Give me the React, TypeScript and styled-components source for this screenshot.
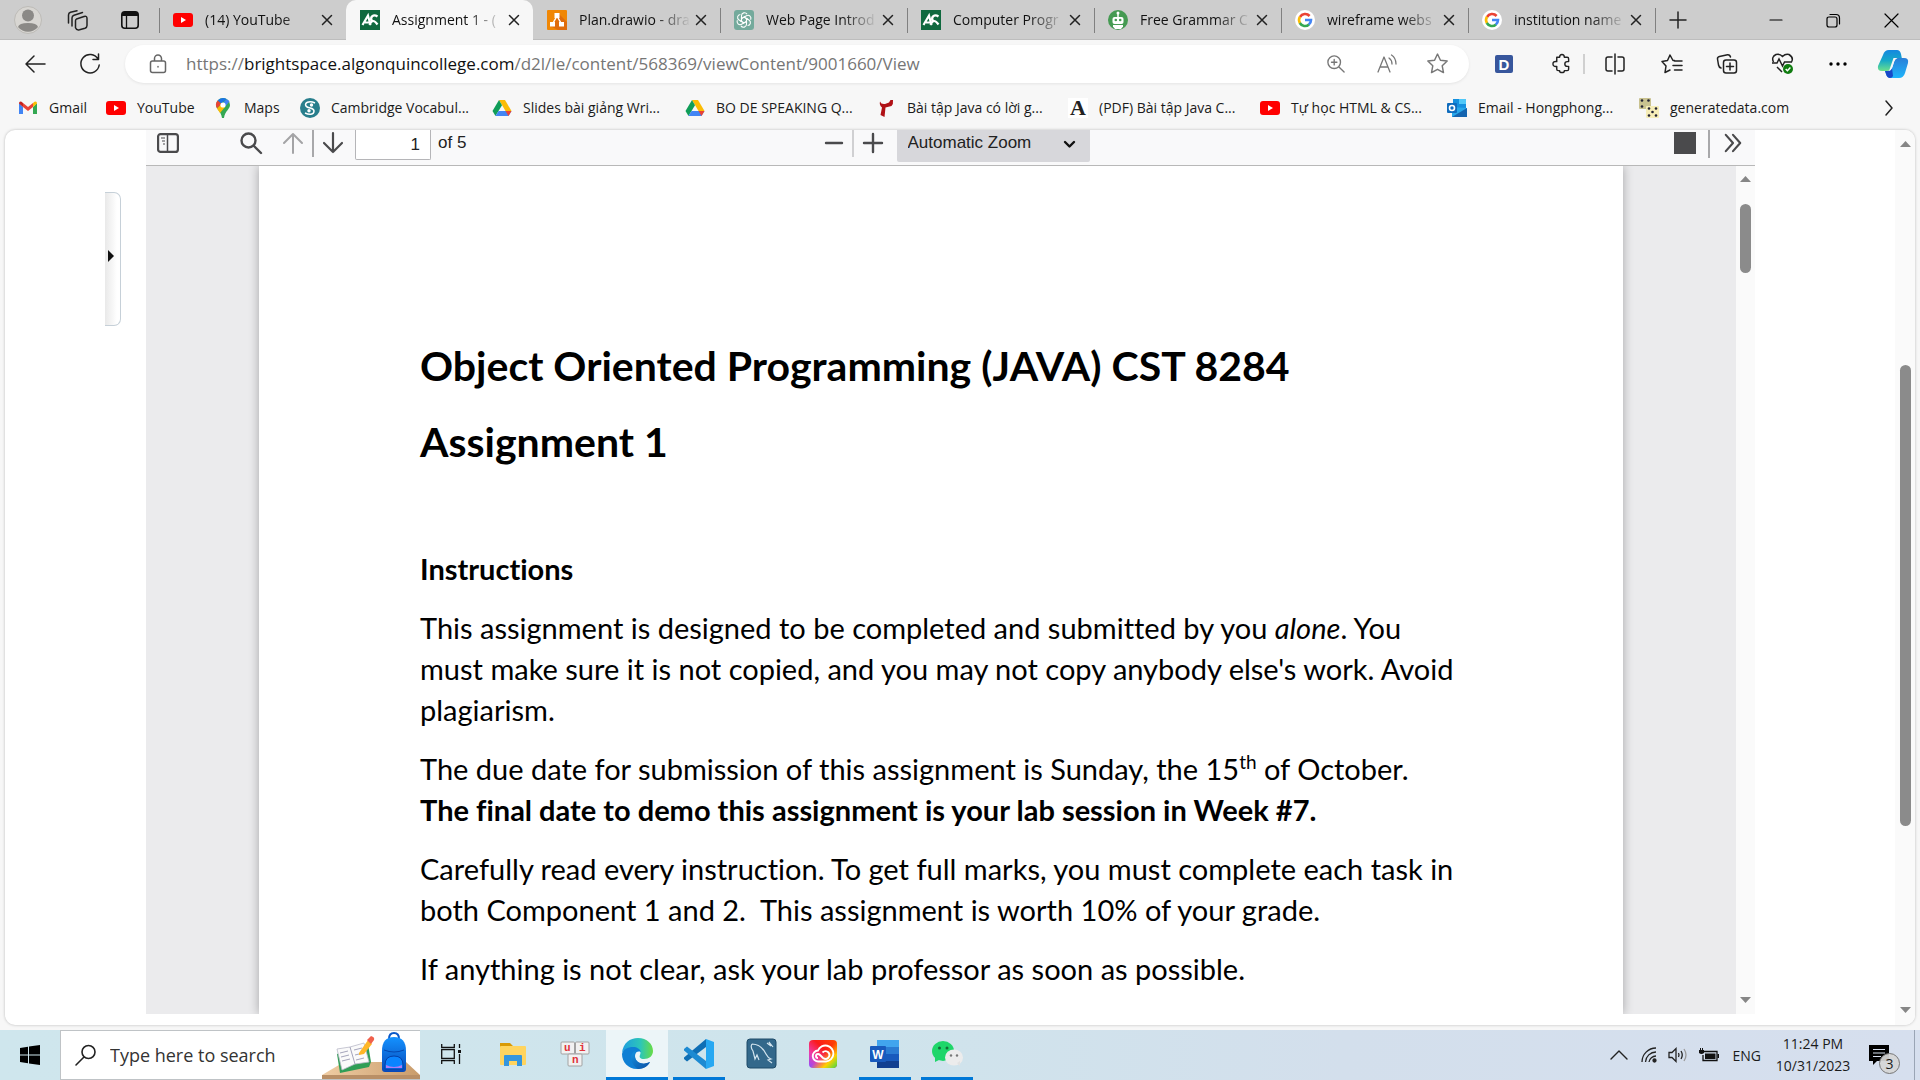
import React from "react";
import styled, { createGlobalStyle } from "styled-components";

const ui = `"Open Sans", "Noto Sans", sans-serif`;
const arial = `"Liberation Sans", Arial, sans-serif`;

const GlobalStyle = createGlobalStyle`
  * { box-sizing: border-box; }
  html, body, #root { height: 100%; margin: 0; }
  body { font-family: ${ui}; color: #1b1b1b; overflow: hidden; }
  button, input, select { font: inherit; color: inherit; margin: 0; }
  button { border: 0; padding: 0; background: none; }
  svg { display: block; flex: none; overflow: visible; }
`;

/* ---------- window ---------- */
const Desktop = styled.div`
  height: 100vh;
  display: flex;
  flex-direction: column;
  background: #f7f7f7;
`;

const TabStrip = styled.header`
  height: 40px;
  flex: none;
  display: flex;
  align-items: center;
  background: #cdcdcd;
  box-shadow: inset 0 -1px #bdbdbd;
`;

const StripTools = styled.div`
  display: flex;
  align-items: center;
  width: 159px;
  height: 100%;
  padding-left: 14px;
  flex: none;
`;

const IconButton = styled.button<{ $w?: number }>`
  display: grid;
  place-items: center;
  height: 100%;
  width: ${(p) => (p.$w ? `${p.$w}px` : "auto")};
  flex: none;
`;

const Tabs = styled.nav`
  display: flex;
  height: 100%;
  min-width: 0;
`;

const Tab = styled.div<{ $active?: boolean; $line?: boolean }>`
  display: flex;
  align-items: center;
  width: 187px;
  min-width: 0;
  padding-right: 14px;
  border-radius: 10px 10px 0 0;
  background: ${(p) => (p.$active ? "#f7f7f7" : "transparent")};
  &::before {
    content: "";
    width: 1px;
    height: 25px;
    margin-right: 13px;
    background: ${(p) => (p.$line ? "#808080" : "transparent")};
  }
`;

const TabTitle = styled.a`
  flex: 1;
  min-width: 0;
  margin: 0 6px 0 12px;
  white-space: nowrap;
  font-size: 14px;
  line-height: 20px;
  color: #111;
  text-decoration: none;
  mask-image: linear-gradient(90deg, #000 76px, transparent 112px);
`;

const WindowButtons = styled.div`
  display: flex;
  height: 100%;
  margin-left: auto;
`;

const AddressRow = styled.div`
  height: 47px;
  flex: none;
  display: flex;
  align-items: center;
`;

const AddressBar = styled.div`
  display: flex;
  align-items: center;
  flex: 1;
  min-width: 0;
  height: 38px;
  margin-left: 15px;
  border-radius: 19px;
  background: #fff;
  box-shadow: 0 1px 3px rgba(0, 0, 0, 0.08);
  padding: 0 8px 0 24px;
`;

const UrlText = styled.a`
  flex: 1;
  min-width: 0;
  margin-left: 19px;
  font-size: 17px;
  line-height: 24px;
  color: #767676;
  text-decoration: none;
  white-space: nowrap;
  b { font-weight: 400; color: #111; }
`;

const Divider = styled.span<{ $h: number; $c: string; $w?: number }>`
  width: ${(p) => p.$w ?? 2}px;
  height: ${(p) => p.$h}px;
  background: ${(p) => p.$c};
  flex: none;
`;

const Bookmarks = styled.nav`
  height: 43px;
  flex: none;
  display: flex;
  align-items: center;
  padding: 0 14px 2px 18px;
`;

const Bookmark = styled.a<{ $w: number }>`
  display: flex;
  align-items: center;
  gap: 11px;
  width: ${(p) => p.$w}px;
  flex: none;
  font-size: 14px;
  line-height: 20px;
  color: #1b1b1b;
  text-decoration: none;
  white-space: nowrap;
`;

const Overflow = styled(IconButton)`
  margin-left: auto;
`;

/* ---------- web content ---------- */
const ContentCard = styled.main`
  flex: 1;
  min-height: 0;
  display: flex;
  margin: 0 5px 5px;
  background: #fff;
  border-radius: 10px;
  box-shadow: 0 0 3px rgba(0, 0, 0, 0.25);
  overflow: hidden;
`;

const SideGutter = styled.aside`
  width: 141px;
  flex: none;
  padding: 62px 25px 0 0;
  display: flex;
  justify-content: flex-end;
  align-items: flex-start;
`;

const DrawerHandle = styled.button`
  width: 16px;
  height: 134px;
  display: flex;
  align-items: center;
  padding: 0 0 6px 3px;
  border: 1px solid #c6d0d8;
  border-left: 0;
  border-radius: 0 7px 7px 0;
  background: linear-gradient(90deg, #e9e9e9, #fff 80%);
`;

const Frame = styled.section`
  flex: 1;
  min-width: 0;
  display: flex;
  flex-direction: column;
  margin-bottom: 11px;
`;

const PdfToolbar = styled.div`
  height: 36px;
  flex: none;
  display: grid;
  grid-template-columns: 1fr auto 1fr;
  background: #f9f9fa;
  border-bottom: 1px solid #b8b8b8;
  color: #222;
  font-family: ${arial};
  font-size: 17px;
`;

const ToolGroup = styled.div<{ $pad: string; $end?: boolean }>`
  display: flex;
  align-items: flex-start;
  justify-content: ${(p) => (p.$end ? "flex-end" : "flex-start")};
  padding: ${(p) => p.$pad};
`;

const PageInput = styled.input`
  width: 76px;
  height: 30px;
  margin: 0 7px 0 12px;
  padding: 0 10px;
  text-align: right;
  border: 1px solid #b5b5b8;
  border-top: 0;
  border-radius: 0 0 2px 2px;
  background: #fff;
`;

const PageCount = styled.label`
  line-height: 25px;
`;

const ZoomSelect = styled.select`
  appearance: none;
  width: 193px;
  height: 32px;
  padding: 0 11px 7px;
  border: 0;
  border-radius: 0 0 2px 2px;
  background: #d7d7db;
`;

const SelectWrap = styled.div`
  display: grid;
  margin-left: 14px;
  > * { grid-area: 1 / 1; }
  svg { justify-self: end; margin: 9px 15px 0 0; pointer-events: none; }
`;

const ToolButton = styled(IconButton)`
  height: 26px;
`;

const ToolRule = styled.span<{ $w: number }>`
  display: flex;
  justify-content: center;
  width: ${(p) => p.$w}px;
`;

const SidebarButton = styled(ToolButton)`
  margin-right: 40px;
`;

const Viewer = styled.div`
  flex: 1;
  min-height: 0;
  display: flex;
  background: #ebebed;
`;

const PageScroll = styled.div`
  flex: 1;
  min-width: 0;
  overflow: hidden;
  padding: 0 113px;
`;

const Page = styled.article`
  min-height: 100%;
  padding: 170px 140px 0 161px;
  background: #fff;
  box-shadow: 0 0 10px rgba(0, 0, 0, 0.3);
  color: #000;
  font-family: Lato, "Open Sans", sans-serif;
  font-variant-ligatures: none;
`;

const Title = styled.h1`
  margin: 0 0 16px;
  font-size: 41px;
  line-height: 60px;
  font-weight: 700;
  white-space: nowrap;
`;

const Heading = styled.h2`
  margin: 76px 0 18px;
  font-size: 29px;
  line-height: 41px;
  font-weight: 700;
`;

const Para = styled.p`
  margin: 0 0 18px;
  font-size: 29px;
  line-height: 41px;
  white-space: nowrap;
  sup { font-size: 19px; line-height: 0; }
`;

const ScrollTrack = styled.div<{ $w: number; $pad: string }>`
  width: ${(p) => p.$w}px;
  flex: none;
  display: flex;
  flex-direction: column;
  align-items: center;
  padding: ${(p) => p.$pad};
  background: #fafafa;
`;

const Thumb = styled.div<{ $size: number }>`
  width: 11px;
  flex: ${(p) => p.$size} 0 0;
  border-radius: 6px;
  background: #8b8b8b;
`;

const Space = styled.div<{ $grow: number }>`
  flex: ${(p) => p.$grow} 0 0;
`;

const OuterSpace = styled.div`
  width: 140px;
  flex: none;
`;

/* ---------- taskbar ---------- */
const Taskbar = styled.footer`
  height: 50px;
  flex: none;
  display: flex;
  background: linear-gradient(90deg, #cfe6ed, #cfe4ec 45%, #d3dfec 70%, #d6dfee);
`;

const StartButton = styled(IconButton)`
  width: 60px;
`;

const SearchBox = styled.label`
  display: flex;
  align-items: center;
  width: 360px;
  flex: none;
  padding-left: 15px;
  background: #fff;
  border: 1px solid #bfc3c6;
  border-right: 0;
`;

const SearchInput = styled.input`
  flex: 1;
  min-width: 0;
  height: 100%;
  margin-left: 14px;
  padding: 0;
  border: 0;
  outline: 0;
  background: none;
  font-size: 18px;
  &::placeholder { color: #333; opacity: 1; }
`;

const Apps = styled.div`
  display: flex;
`;

const AppButton = styled.button<{ $open?: boolean; $active?: boolean }>`
  width: 62px;
  display: grid;
  place-items: center;
  background: ${(p) => (p.$active ? "#ecf5f8" : "none")};
  &::after {
    content: "";
    align-self: end;
    height: 3px;
    width: ${(p) => (p.$active ? 62 : 52)}px;
    background: ${(p) => (p.$open ? "#0078d7" : "transparent")};
  }
  grid-template-rows: 1fr 3px;
`;

const Tray = styled.div`
  display: flex;
  align-items: center;
  margin-left: auto;
`;

const Lang = styled.button`
  margin: 0 10px 0 8px;
  font-size: 14px;
`;

const Clock = styled.time`
  width: 84px;
  text-align: center;
  font-size: 14px;
  line-height: 22px;
`;

const Notice = styled.button`
  position: relative;
  width: 20px;
  height: 20px;
  margin: 0 25px 0 14px;
`;

const Badge = styled.span`
  position: absolute;
  left: 10px;
  top: 8px;
  width: 21px;
  height: 21px;
  border: 1px solid #777;
  border-radius: 50%;
  background: rgba(214, 214, 214, 0.93);
  font-size: 14px;
  line-height: 19px;
  text-align: center;
`;

const DesktopEdge = styled.div`
  width: 6px;
  height: 100%;
  border-left: 1px solid #9aa5b5;
`;

/* ---------- icons ---------- */
type LineProps = { d: string; s?: number; w?: number; c?: string; vb?: string };
const Line = ({ d, s = 20, w = 1.5, c = "#222", vb = "0 0 20 20" }: LineProps) => (
  <svg width={s} height={s} viewBox={vb} fill="none" stroke={c} strokeWidth={w} strokeLinecap="round" strokeLinejoin="round">
    <path d={d} />
  </svg>
);
const CloseIcon = () => <Line s={10} vb="0 0 10 10" w={1.5} d="M0.5 0.5 9.5 9.5M9.5 0.5 0.5 9.5" />;
const YouTube = () => (
  <svg width="20" height="20" viewBox="0 0 20 20"><rect y="3" width="20" height="14" rx="3" fill="#f00" /><path d="M8 7v6l5-3z" fill="#fff" /></svg>
);
const College = () => (
  <svg width="20" height="20" viewBox="0 0 20 20"><rect width="20" height="20" fill="#10693f" /><path d="M2.500 15 8 5.500l2.500 9.500M5 12.500h5M17.500 6.500C13.500 3.500 9.500 7 12 11M9.500 15c2-5 4.500-5.500 8-.5" fill="none" stroke="#fff" strokeWidth="2.200" /></svg>
);
const Drawio = () => (
  <svg width="20" height="20" viewBox="0 0 20 20"><rect width="20" height="20" rx="1" fill="#f08705" /><path d="M12 4 20 12v8h-9l-8-4z" fill="#df6c0c" /><path d="M10 6 5.500 14M10 6l4.500 8" stroke="#fff" strokeWidth="1.500" /><path d="M7.500 3h5v5h-5zM3 12h5v4.500H3zM12 12h5v4.500h-5z" fill="#fff" /></svg>
);
const ChatGpt = () => (
  <svg width="20" height="20" viewBox="0 0 20 20"><rect width="20" height="20" rx="3" fill="#74aa9c" /><g fill="none" stroke="#fff" strokeWidth="1.100">{[0, 60, 120, 180, 240, 300].map((a) => (<path key={a} transform={`rotate(${a} 10 10)`} d="M7.500 8.600V5.700a3 3 0 0 1 5.500-1.600M7.500 8.600 10 7.100l3.800 2.200" />))}</g></svg>
);
const Grammar = () => (
  <svg width="20" height="20" viewBox="0 0 20 20"><circle cx="10" cy="10" r="10" fill="#459a52" /><path d="M10 3v4" stroke="#fff" strokeWidth="1.500" /><circle cx="10" cy="3" r="1.500" fill="#fff" /><rect x="4.500" y="7" width="11" height="7" rx="2" fill="#fff" /><circle cx="7.800" cy="10" r="1.300" fill="#459a52" /><circle cx="12.200" cy="10" r="1.300" fill="#459a52" /><path d="M5 15h10v1.500l-2 2.500H7l-2-2.500z" fill="#fff" /></svg>
);
const Google = () => (
  <svg width="20" height="20" viewBox="0 0 20 20"><circle cx="10" cy="10" r="10" fill="#fff" /><g fill="none" strokeWidth="2.600"><path d="M14.600 6A6 6 0 0 0 5 7" stroke="#ea4335" /><path d="M5 6.800a6 6 0 0 0 0 6.400" stroke="#fbbc05" /><path d="M4.800 13a6 6 0 0 0 9.200 1.500" stroke="#34a853" /><path d="M13.800 14.600A6 6 0 0 0 16 10h-6" stroke="#4285f4" /></g></svg>
);
const Gmail = () => (
  <svg width="20" height="20" viewBox="0 0 20 20"><path d="M1 5v11h4V9z" fill="#4285f4" /><path d="M15 9v7h4V5z" fill="#34a853" /><path d="M1 5.500 5 9V5L3.500 3.700Q1 3 1 5.500z" fill="#c5221f" /><path d="M15 5v4l4-3.500Q19 3 16.500 3.700z" fill="#fbbc04" /><path d="M5 5v4l5 4 5-4V5l-5 4z" fill="#ea4335" /></svg>
);
const Maps = () => (
  <svg width="20" height="20" viewBox="0 0 20 20"><path d="M10 0a7 7 0 0 1 7 7c0 4-5 6-6 13h-2C8 13 3 11 3 7a7 7 0 0 1 7-7z" fill="#34a853" /><path d="M10 0a7 7 0 0 0-5.400 2.500L8 5.500 13.500 1A7 7 0 0 0 10 0z" fill="#1a73e8" /><path d="M4.600 2.500A7 7 0 0 0 4 10.500L8.300 5.700z" fill="#ea4335" /><path d="m4 10.500 4-4 4 2.500-5 6z" fill="#fbbc04" /><path d="M13.500 1 9 6l3 3 4.500-5.500Q15.500 2 13.500 1z" fill="#4285f4" /><circle cx="10" cy="7" r="2.600" fill="#fff" /></svg>
);
const Cambridge = () => (
  <svg width="20" height="20" viewBox="0 0 20 20"><circle cx="10" cy="10" r="10" fill="#287e8c" /><path d="M15 5C9 2 4 5 6 8s8 1 8 5-5 4-9 2" fill="none" stroke="#fff" strokeWidth="1.500" /><circle cx="11.500" cy="7" r="1.700" fill="#fff" /><circle cx="9" cy="12.800" r="1.700" fill="#fff" /></svg>
);
const Drive = () => (
  <svg width="20" height="20" viewBox="0 0 20 20"><path d="M7 2h6l6.500 11h-6z" fill="#fbbc04" /><path d="M7 2 .5 13l3 5L10 7.200z" fill="#0f9d58" /><path d="M6.500 13h13l-3 5h-13z" fill="#4285f4" /><path d="m16.500 18 3-5h-6z" fill="#ea4335" /></svg>
);
const RedMark = () => (
  <svg width="20" height="20" viewBox="0 0 20 20"><path d="M4 3.500q1 3 5 2.500l4-1.500 1.500-2.500L17 2q.5 4-1.500 6l-6 1.500L8.500 19l-4-2L6 9.500Q3 7 4 3.500z" fill="#b01116" /></svg>
);
const Academia = () => (
  <svg width="20" height="20" viewBox="0 0 20 20"><rect width="20" height="20" fill="#fff" /><text x="10" y="17" textAnchor="middle" fontFamily="Liberation Serif, serif" fontWeight="700" fontSize="22" fill="#222">A</text></svg>
);
const Outlook = () => (
  <svg width="20" height="20" viewBox="0 0 20 20"><path d="M6 1h13v10H6z" fill="#1490df" /><path d="M12 1h7v5h-7z" fill="#50c8f8" /><path d="M5 9l15 1v9H5z" fill="#28a8ea" /><path d="M5 19 20 10v9z" fill="#1565b0" /><rect y="5" width="10" height="10" rx="1" fill="#0f6cbd" /><circle cx="5" cy="10" r="2.500" fill="none" stroke="#fff" strokeWidth="1.600" /></svg>
);
const Dice = () => (
  <svg width="20" height="20" viewBox="0 0 20 20"><rect width="12" height="11" rx="1" fill="#c9c290" /><rect x="7" y="8" width="13" height="12" rx="1" fill="#f6edb8" /><g fill="#223">{[[3, 2.5], [9.5, 2.5], [3, 8.5], [10, 10.5], [17, 10.5], [13.5, 14], [10, 17.500], [17, 17.500]].map(([x, y]) => (<circle key={`${x}-${y}`} cx={x} cy={y} r="1.300" />))}</g></svg>
);
const Copilot = () => (
  <svg width="30" height="28" viewBox="0 0 30 28">
    <defs><linearGradient id="cpA" x1="0" y1="0" x2="0" y2="1"><stop stopColor="#1587e0" /><stop offset=".5" stopColor="#16a9c8" /><stop offset="1" stopColor="#6be08c" /></linearGradient><linearGradient id="cpB" x1="0" y1="0" x2="0" y2="1"><stop stopColor="#2a7fd8" /><stop offset="1" stopColor="#1fb5fb" /></linearGradient></defs>
    <path d="M5 5Q6.500 0 11 0h8q3 0 4 4l1 5h-5q-3 0-4 3l-2 6q-1 3-4 3H4q-5 0-4-5z" fill="url(#cpA)" />
    <path d="M19 8h7q5 0 4 5l-3 10q-1.500 5-6 5h-8q-4 0-5-4l-1-3h3q3 0 4-3l2-6q1-4 3-4z" fill="url(#cpB)" />
    <path d="M7 21h3q3 0 4-3l1 8q-1 2-3 2-3 0-4-4z" fill="#1848c8" />
    <path d="M15.500 8h4q-2.500 1-3.500 4l-1.500 5q-1 3-3.500 4z" fill="#f7f7f7" />
  </svg>
);
const Tri = ({ up }: { up?: boolean }) => (
  <svg width="11" height="6" viewBox="0 0 11 6"><path d={up ? "M0 6 5.500 0 11 6z" : "M0 0h11L5.500 6z"} fill="#868686" /></svg>
);
const Avatar = () => (
  <svg width="28" height="28" viewBox="0 0 28 28"><circle cx="14" cy="14" r="13.500" fill="#d8d6d2" stroke="#bdbbb7" /><circle cx="14" cy="9.500" r="6" fill="#8b8986" /><path d="M4 21q1-4 10-4t10 4a13 13 0 0 1-20 0z" fill="#8b8986" /></svg>
);
const Desk = () => (
  <svg width="98" height="48" viewBox="0 0 98 48">
    <defs><linearGradient id="bp" x1="0" y1="0" x2="0" y2="1"><stop stopColor="#1492ff" /><stop offset="1" stopColor="#0748b8" /></linearGradient><linearGradient id="dk"><stop stopColor="#f0cda4" /><stop offset="1" stopColor="#c99c6b" /></linearGradient></defs>
    <path d="M22 31h62l14 13H0z" fill="url(#dk)" /><path d="M0 44h98v4H0z" fill="#b98f66" />
    <path d="m15 23 3 19 29-6 2-5-3-18z" fill="#2f9e55" />
    <path d="m15 18 13-2 14-4 5 19-14 2-13 6z" fill="#fafafa" stroke="#b9b9c8" strokeWidth=".8" /><path d="m28 16 5 17M18 22l8-2m-7 6 8-2m-7 6 8-2m4-9 8-2m-7 7 8-2m-7 7 8-2" stroke="#a5a5bb" fill="none" />
    <path d="m37 22 9-13 4 4-8 10-5 1z" fill="#ffb627" /><path d="m45 9 4-4q4 1 3 4l-3 4z" fill="#f0604c" />
    <path d="M67 8q0-6 5-6t5 6" fill="none" stroke="#0a58c8" strokeWidth="2" /><path d="M60 20q0-14 12-14t12 14v18q0 3-3 3H63q-3 0-3-3z" fill="url(#bp)" /><path d="M63 34q0-9 9-9t9 9v4H63z" fill="#0a84ff" stroke="#0440a8" /><path d="M64 34q8 4 16 0v3H64z" fill="#b07cf5" /><path d="M62 19q10 4 20 0" fill="none" stroke="#0447b0" />
  </svg>
);
const TaskView = () => (
  <svg width="20" height="20" viewBox="0 0 20 20" fill="none" stroke="#111" strokeWidth="1.300"><path d="M.7 0v3.500h12.600V0M.7 20v-3.500h12.600V20M.7 5.700h12.600v8.600H.7zM18.500 0v4M18.500 10v10" /><path d="M17 6h3v3h-3z" fill="#111" stroke="none" /></svg>
);
const Explorer = () => (
  <svg width="28" height="28" viewBox="0 0 28 28"><path d="M1 3h10l3 3h12v6H1z" fill="#d99a06" /><rect x="1" y="6" width="26" height="19" rx="1" fill="#ffd45e" /><path d="M5 26V16q0-1 1-1h16q1 0 1 1v10h-5v-5h-8v5z" fill="#3596dd" /></svg>
);
const Unikey = () => (
  <svg width="30" height="26" viewBox="0 0 30 26"><g fill="#f1f1f1" stroke="#a2a2a2"><rect x="1" y="1" width="13.500" height="12" rx="1" /><rect x="15.500" y="1" width="13.500" height="12" rx="1" /><rect x="8" y="13" width="14" height="12" rx="1" /></g><g fill="#e0343a" fontFamily="Liberation Mono, monospace" fontWeight="700" fontSize="11"><text x="4" y="10">u</text><text x="19" y="10">i</text><text x="12" y="22">n</text></g></svg>
);
const Edge = () => (
  <svg width="31" height="31" viewBox="0 0 31 31">
    <defs><linearGradient id="e1"><stop stopColor="#1e9de0" /><stop offset=".6" stopColor="#2dc6b8" /><stop offset="1" stopColor="#68dc45" /></linearGradient><linearGradient id="e2" x1="0" y1="0" x2="1" y2="1"><stop stopColor="#1491df" /><stop offset="1" stopColor="#0a4fa4" /></linearGradient></defs>
    <path d="M0 15C1 5 8 0 16 0c9 0 15 6 15 13 0 5-4 8-9 8-4 0-5-2-4-4 2-4-2-7-7-7C6 10 1 12 0 15z" fill="url(#e1)" />
    <path d="M0 16C1 11 6 9 11 9c4 0 7 2 8 5-6-2-7 4-5 8 3 5 9 5 14 2-3 5-8 7-13 7C6 31 0 24 0 16z" fill="#0f7fd4" />
    <path d="M13 13c-7 4-4 14 3 18 6 0 10-3 12-7-7 3-14 1-15-5-.3-2 0-4 1-6z" fill="url(#e2)" />
  </svg>
);
const Code = () => (
  <svg width="30" height="30" viewBox="0 0 30 30"><path d="M22 0v8L3 22.500 0 20v-1.500z" fill="#0f6fb5" /><path d="M22 30v-8L3 7.500 0 10v1.500z" fill="#1d8ad2" /><path d="M22 0l8 3v24l-8 3z" fill="#27a8f2" /></svg>
);
const MySql = () => (
  <svg width="29" height="29" viewBox="0 0 29 29"><rect width="29" height="29" rx="3" fill="#33688b" stroke="#1f4b68" /><path d="M5 5q9 0 14 10 2 4 5 5l-3 1 4 3M5 5q-2 3 1 7l2 8 2-4 2 5M20 4l4 3-2-4 4 5" fill="none" stroke="#d3e4ee" strokeWidth="1.200" /></svg>
);
const Creative = () => (
  <svg width="28" height="28" viewBox="0 0 28 28">
    <defs>
      <linearGradient id="cc" x1="0" y1="1" x2="1" y2="0"><stop stopColor="#8a4dff" /><stop offset=".3" stopColor="#f03ba8" /><stop offset=".6" stopColor="#fa1a1a" /><stop offset="1" stopColor="#ff4a00" /></linearGradient>
      <linearGradient id="cd" x1="0" y1="0" x2="1" y2="1"><stop offset=".5" stopColor="#ffb000" stopOpacity="0" /><stop offset=".75" stopColor="#ffd000" /><stop offset="1" stopColor="#3ddc4b" /></linearGradient>
    </defs>
    <rect width="28" height="28" rx="4" fill="url(#cc)" /><rect width="28" height="28" rx="4" fill="url(#cd)" />
    <path d="M9.500 21.500a5.500 5.500 0 0 1-.5-11 8 8 0 1 1 8 11zM9 18q-2 0-2-2t2-2q1 0 2 1l3 3q3 2 5 0 3-3 0-6-3-2-5.500.5" fill="none" stroke="#fff" strokeWidth="1.900" />
  </svg>
);
const Word = () => (
  <svg width="30" height="28" viewBox="0 0 30 28"><path d="M7 0h22v7H7z" fill="#41a5ee" /><path d="M7 7h22v7H7z" fill="#2b7cd3" /><path d="M7 14h22v7H7z" fill="#185abd" /><path d="M7 21h22v7H7z" fill="#103f91" /><rect y="6" width="16" height="16" rx="1" fill="#185abd" /><text x="8" y="18.500" textAnchor="middle" fontFamily="Liberation Sans, sans-serif" fontWeight="700" fontSize="12" fill="#fff">W</text></svg>
);
const WeChat = () => (
  <svg width="31" height="26" viewBox="0 0 31 26"><ellipse cx="11" cy="10" rx="11" ry="10" fill="#1fd66a" /><path d="m3 16 0 5 6-3z" fill="#1fd66a" /><ellipse cx="22" cy="16.500" rx="9" ry="8" fill="#ececec" /><path d="m25 22 3 3v-5z" fill="#e2e2e2" /><g fill="#146b38"><circle cx="7.500" cy="7" r="1.500" /><circle cx="15" cy="7" r="1.500" /></g><g fill="#777"><circle cx="19" cy="14.500" r="1.200" /><circle cx="25" cy="14.500" r="1.200" /></g></svg>
);

const tabs = [
  { t: "(14) YouTube", i: <YouTube />, line: true },
  { t: "Assignment 1 - (", i: <College />, active: true },
  { t: "Plan.drawio - dra", i: <Drawio /> },
  { t: "Web Page Introd", i: <ChatGpt />, line: true },
  { t: "Computer Progr", i: <College />, line: true },
  { t: "Free Grammar C", i: <Grammar />, line: true },
  { t: "wireframe webs", i: <Google />, line: true },
  { t: "institution name", i: <Google />, line: true },
];

const bookmarks = [
  { t: "Gmail", i: <Gmail />, w: 88 },
  { t: "YouTube", i: <YouTube />, w: 107 },
  { t: "Maps", i: <Maps />, w: 87 },
  { t: "Cambridge Vocabul...", i: <Cambridge />, w: 192 },
  { t: "Slides bài giảng Wri...", i: <Drive />, w: 193 },
  { t: "BO DE SPEAKING Q...", i: <Drive />, w: 191 },
  { t: "Bài tập Java có lời g...", i: <RedMark />, w: 192 },
  { t: "(PDF) Bài tập Java C...", i: <Academia />, w: 192 },
  { t: "Tự học HTML & CS...", i: <YouTube />, w: 187 },
  { t: "Email - Hongphong...", i: <Outlook />, w: 192 },
  { t: "generatedata.com", i: <Dice />, w: 160 },
];

const apps = [
  { n: "Task View", i: <TaskView /> },
  { n: "File Explorer", i: <Explorer /> },
  { n: "UniKey", i: <Unikey /> },
  { n: "Edge", i: <Edge />, open: true, active: true },
  { n: "Visual Studio Code", i: <Code />, open: true },
  { n: "MySQL Workbench", i: <MySql /> },
  { n: "Creative Cloud", i: <Creative /> },
  { n: "Word", i: <Word />, open: true },
  { n: "WeChat", i: <WeChat />, open: true },
];

const grey = "#4a4a4c";

export default function App() {
  return (
    <Desktop>
      <GlobalStyle />
      <TabStrip>
        <StripTools>
          <IconButton $w={28} aria-label="Profile"><Avatar /></IconButton>
          <IconButton $w={70} aria-label="Workspaces"><Line s={21} vb="0 0 21 21" d="M9.500 9 17 6.500q3-1 3 2v7q0 2-2 2.800l-5.500 1.500q-3 .7-4-2v-7q0-1 1-1.800zM5 16V8q0-2 2-2.800L15.500 2.500M1.500 13V5q0-2 2-2.800L10 .8" /></IconButton>
          <IconButton $w={36} aria-label="Tab actions"><svg width="18" height="18" viewBox="0 0 18 18"><rect x=".8" y=".8" width="16.400" height="16.400" rx="3" fill="none" stroke="#111" strokeWidth="1.600" /><path d="M1 5V3q0-2 2-2h12q2 0 2 2v2z" fill="#111" /><path d="M5.500 5v12" stroke="#111" strokeWidth="1.300" /></svg></IconButton>
        </StripTools>
        <Tabs>
          {tabs.map((x) => (
            <Tab key={x.t} $active={x.active} $line={x.line}>
              {x.i}
              <TabTitle href="#">{x.t}</TabTitle>
              <IconButton aria-label="Close tab"><CloseIcon /></IconButton>
            </Tab>
          ))}
        </Tabs>
        <Divider $h={25} $w={1} $c="#808080" />
        <IconButton $w={43} aria-label="New tab"><Line s={16} vb="0 0 16 16" d="M8 0v16M0 8h16" /></IconButton>
        <WindowButtons>
          <IconButton $w={57} aria-label="Minimize"><Line s={12} vb="0 0 12 12" w={1.2} c="#000" d="M0 6h12" /></IconButton>
          <IconButton $w={58} aria-label="Restore"><Line s={13} vb="0 0 13 13" w={1.2} c="#000" d="M2 3h6q2 0 2 2v6q0 2-2 2H2q-2 0-2-2V5q0-2 2-2zM3 .5h6q3.500 0 3.500 3.500v6" /></IconButton>
          <IconButton $w={58} aria-label="Close"><Line s={13} vb="0 0 13 13" w={1.2} c="#000" d="M0 0l13 13M13 0 0 13" /></IconButton>
        </WindowButtons>
      </TabStrip>

      <AddressRow>
        <IconButton $w={70} aria-label="Back"><Line d="M9 2 1 10l8 8M1 10h19" /></IconButton>
        <IconButton $w={40} aria-label="Reload"><Line d="M18 5A9.200 9.200 0 1 0 19.200 11M18.500 0v5.500H13" /></IconButton>
        <AddressBar>
          <Line s={18} c="#666" vb="0 0 18 18" d="M3.500 6h11q2 0 2 2v7.500q0 2-2 2h-11q-2 0-2-2V8q0-2 2-2zM5.500 6V3.500a3.500 3.500 0 0 1 7 0V6M9 11.500v.5" />
          <UrlText href="#">https://<b>brightspace.algonquincollege.com</b>/d2l/le/content/568369/viewContent/9001660/View</UrlText>
          <IconButton $w={50} aria-label="Zoom"><Line c="#777" s={18} d="M15 8A7 7 0 1 1 1 8a7 7 0 0 1 14 0zM13 13l6 6M8 5v6M5 8h6" /></IconButton>
          <IconButton $w={52} aria-label="Read aloud"><Line c="#777" w={1.3} d="M1 18 7 3l6 15M3.500 13h7M12 4q3 2 3 6M14.500 1Q19 4 19 10" /></IconButton>
          <IconButton $w={48} aria-label="Favorite"><Line c="#777" w={1.4} s={21} d="m10 1 2.800 5.900 6.400.8-4.700 4.500 1.200 6.400L10 15.500l-5.700 3.100 1.200-6.400L.8 7.700l6.400-.8z" /></IconButton>
        </AddressBar>
        <IconButton $w={70} aria-label="Dictionary"><svg width="18" height="18" viewBox="0 0 18 18"><rect width="18" height="18" rx="2" fill="#37569c" /><text x="9" y="14.500" textAnchor="middle" fontFamily="Liberation Sans, sans-serif" fontWeight="700" fontSize="15" fill="#fff">D</text></svg></IconButton>
        <IconButton $w={44} aria-label="Extensions"><Line s={19} d="M5 3.500h3Q8 .5 10.500.5T13 3.500h3q1.500 0 1.500 1.500v3h-1.500q-2.500 0-2.500 2.500T16 13h1.500v3q0 1.500-1.500 1.500h-3q0 2-2.500 2t-2.500-2H6.500Q5 17.500 5 16v-3Q1 13.500 1 10.500T5 8z" /></IconButton>
        <Divider $h={20} $c="#d0d0d0" />
        <IconButton $w={60} aria-label="Split screen"><Line d="M7 3H3Q1 3 1 5v10q0 2 2 2h4M13 3h4q2 0 2 2v10q0 2-2 2h-4M10 0v20" /></IconButton>
        <IconButton $w={54} aria-label="Favorites"><Line d="M12.500 6.500H11L8 1 5.500 6.500 0 7.500l4 4.500-1 6.500 5-2.500M12.500 7H20M11 11.500h9M12.500 16H20" /></IconButton>
        <IconButton $w={56} aria-label="Collections"><Line d="M9 6h8q2.500 0 2.500 2.500v8Q19.500 19 17 19H9q-2.500 0-2.500-2.500v-8Q6.500 6 9 6zM13 9v7M9.500 12.500h7M4 14q-2-.5-2.500-3L.5 5Q.3 3 2.500 2.500l8-1.800Q13 .5 13.500 3" /></IconButton>
        <IconButton $w={55} aria-label="Browser essentials"><svg width="21" height="21" viewBox="0 0 21 21" fill="none" stroke="#222" strokeWidth="1.500"><path d="M1.500 9Q-1 4 4 1.500q4-1 6.500 2 3-3 6.500-2 5 3 2.500 7.500M5 14l5 5M0 10h5l2-4 3.500 7 2-4H20" /><circle cx="16" cy="16" r="5" fill="#107c10" stroke="none" /><path d="m13.700 16 1.700 1.700 3-3.200" stroke="#fff" /></svg></IconButton>
        <IconButton $w={56} aria-label="More"><svg width="18" height="4" viewBox="0 0 18 4"><circle cx="2" cy="2" r="1.700" /><circle cx="9" cy="2" r="1.700" /><circle cx="16" cy="2" r="1.700" /></svg></IconButton>
        <IconButton $w={54} aria-label="Copilot"><Copilot /></IconButton>
      </AddressRow>

      <Bookmarks>
        {bookmarks.map((b) => (
          <Bookmark key={b.t} href="#" $w={b.w}>{b.i}{b.t}</Bookmark>
        ))}
        <Overflow $w={34} aria-label="More bookmarks"><Line s={14} vb="0 0 14 14" d="M4 0l6 7-6 7" /></Overflow>
      </Bookmarks>

      <ContentCard>
        <SideGutter>
          <DrawerHandle aria-label="Open panel"><svg width="6" height="12" viewBox="0 0 6 12"><path d="M0 0 6 6 0 12z" fill="#111" /></svg></DrawerHandle>
        </SideGutter>
        <Frame>
          <PdfToolbar>
            <ToolGroup $pad="0 0 0 11px">
              <SidebarButton $w={22} aria-label="Sidebar"><svg width="22" height="20" viewBox="0 0 22 20" fill="none" stroke={grey} strokeWidth="2.200"><rect x="1.100" y="1.100" width="19.800" height="17.800" rx="2.500" /><path d="M10.500 1v18" strokeWidth="1.500" /><path d="M4 5h4M5 8h3M6 11h2" strokeWidth="1.200" /></svg></SidebarButton>
              <ToolButton $w={64} aria-label="Find"><Line s={22} vb="0 0 22 22" c={grey} w={2.4} d="M15.500 8.500a7 7 0 1 1-14 0 7 7 0 0 1 14 0zM13.500 13.500 21 21" /></ToolButton>
              <ToolButton aria-label="Previous page"><Line s={20} c="#a4a4a6" w={2} d="M10 20V1M1 10l9-9 9 9" /></ToolButton>
              <ToolRule $w={20}><Divider $h={27} $c="#a8a8aa" /></ToolRule>
              <ToolButton aria-label="Next page"><Line s={20} c={grey} w={2.2} d="M10 0v19M1 10l9 9 9-9" /></ToolButton>
              <PageInput id="page" defaultValue="1" />
              <PageCount htmlFor="page">of 5</PageCount>
            </ToolGroup>
            <ToolGroup $pad="0 0 0 13px">
              <ToolButton aria-label="Zoom out"><Line s={18} vb="0 0 18 18" c={grey} w={2.4} d="M1 9h16" /></ToolButton>
              <ToolRule $w={20}><Divider $h={27} $c="#d0d0d2" /></ToolRule>
              <ToolButton aria-label="Zoom in"><Line s={20} c={grey} w={2.4} d="M1 10h18M10 1v18" /></ToolButton>
              <SelectWrap>
                <ZoomSelect aria-label="Zoom"><option>Automatic Zoom</option></ZoomSelect>
                <Line s={11} vb="0 0 11 11" c="#111" w={2.4} d="M1 3l4.500 4.500L10 3" />
              </SelectWrap>
            </ToolGroup>
            <ToolGroup $pad="0 11px 0 0" $end>
              <ToolButton $w={22} aria-label="Colour"><svg width="22" height="22" viewBox="0 0 22 22"><path d="M0 0h22v22H0z" fill={grey} /></svg></ToolButton>
              <ToolRule $w={26}><Divider $h={28} $c="#a8a8aa" /></ToolRule>
              <ToolButton $w={22} aria-label="Tools"><Line s={18} c={grey} w={2.4} d="M2 1l8 9-8 9M10 1l8 9-8 9" /></ToolButton>
            </ToolGroup>
          </PdfToolbar>
          <Viewer>
            <PageScroll>
              <Page>
                <Title>Object Oriented Programming (JAVA) CST 8284</Title>
                <Title>Assignment 1</Title>
                <Heading>Instructions</Heading>
                <Para>This assignment is designed to be completed and submitted by you <em>alone</em>. You<br />must make sure it is not copied, and you may not copy anybody else's work. Avoid<br />plagiarism.</Para>
                <Para>The due date for submission of this assignment is Sunday, the 15<sup>th</sup> of October.<br /><strong>The final date to demo this assignment is your lab session in Week #7.</strong></Para>
                <Para>Carefully read every instruction. To get full marks, you must complete each task in<br />both Component 1 and 2.&nbsp; This assignment is worth 10% of your grade.</Para>
                <Para>If anything is not clear, ask your lab professor as soon as possible.</Para>
              </Page>
            </PageScroll>
            <ScrollTrack $w={19} $pad="10px 0 11px">
              <Tri up /><Space $grow={22} /><Thumb $size={69} /><Space $grow={724} /><Tri />
            </ScrollTrack>
          </Viewer>
        </Frame>
        <OuterSpace />
        <ScrollTrack $w={20} $pad="11px 0 12px">
          <Tri up /><Space $grow={218} /><Thumb $size={461} /><Space $grow={181} /><Tri />
        </ScrollTrack>
      </ContentCard>

      <Taskbar>
        <StartButton aria-label="Start"><svg width="20" height="20" viewBox="0 0 20 20"><path d="M0 3 8 1.800v7.700H0zM9 1.600 20 0v9.500H9zM0 10.500h8v7.700L0 17zM9 10.500h11V20L9 18.400z" /></svg></StartButton>
        <SearchBox>
          <Line s={20} w={1.6} d="M19 7A6.500 6.500 0 1 1 6 7a6.500 6.500 0 0 1 13 0zM8 12 0 20" />
          <SearchInput placeholder="Type here to search" aria-label="Search" />
          <Desk />
        </SearchBox>
        <Apps>
          {apps.map((a) => (
            <AppButton key={a.n} aria-label={a.n} $open={a.open} $active={a.active}>{a.i}</AppButton>
          ))}
        </Apps>
        <Tray>
          <IconButton $w={32} aria-label="Show hidden icons"><Line s={16} vb="0 0 16 16" w={1.4} d="M0 12l8-8 8 8" /></IconButton>
          <IconButton $w={28} aria-label="Network"><svg width="16" height="16" viewBox="0 0 16 16" fill="none" stroke="#222" strokeWidth="1.300"><path d="M1 15A14 14 0 0 1 15 1M4.500 15A10.500 10.500 0 0 1 15 5M8 15a7 7 0 0 1 7-6" /><circle cx="13.500" cy="13.500" r="1.500" fill="#222" /></svg></IconButton>
          <IconButton $w={30} aria-label="Volume"><svg width="20" height="16" viewBox="0 0 20 16" fill="none" stroke="#222" strokeWidth="1.300"><path d="M1 5.500h3L8 1.500v13L4 10.500H1zM10.500 6q1 2 0 4M13 4q2.500 4 0 8" /><path d="M16 2q4 6 0 12" stroke="#999" /></svg></IconButton>
          <IconButton $w={32} aria-label="Battery"><svg width="20" height="14" viewBox="0 0 20 14"><path d="M5 3.500h13v9H4V7" fill="none" stroke="#111" strokeWidth="1.300" /><path d="M6 5.500h10.500v5.500H6zM18.500 6H20v4h-1.500zM0 2h1V0h1v2h1V0h1v2h1v3q-2.500 2-5 0z" fill="#111" /></svg></IconButton>
          <Lang>ENG</Lang>
          <Clock>11:24 PM<br />10/31/2023</Clock>
          <Notice aria-label="Notifications"><svg width="20" height="20" viewBox="0 0 20 20"><path d="M0 0h20v16H8l-4 4v-4H0z" /><path d="M4 4.500h12M4 8h12M4 11.500h8" stroke="#d6dfee" strokeWidth="1.200" /></svg><Badge>3</Badge></Notice>
          <DesktopEdge />
        </Tray>
      </Taskbar>
    </Desktop>
  );
}
